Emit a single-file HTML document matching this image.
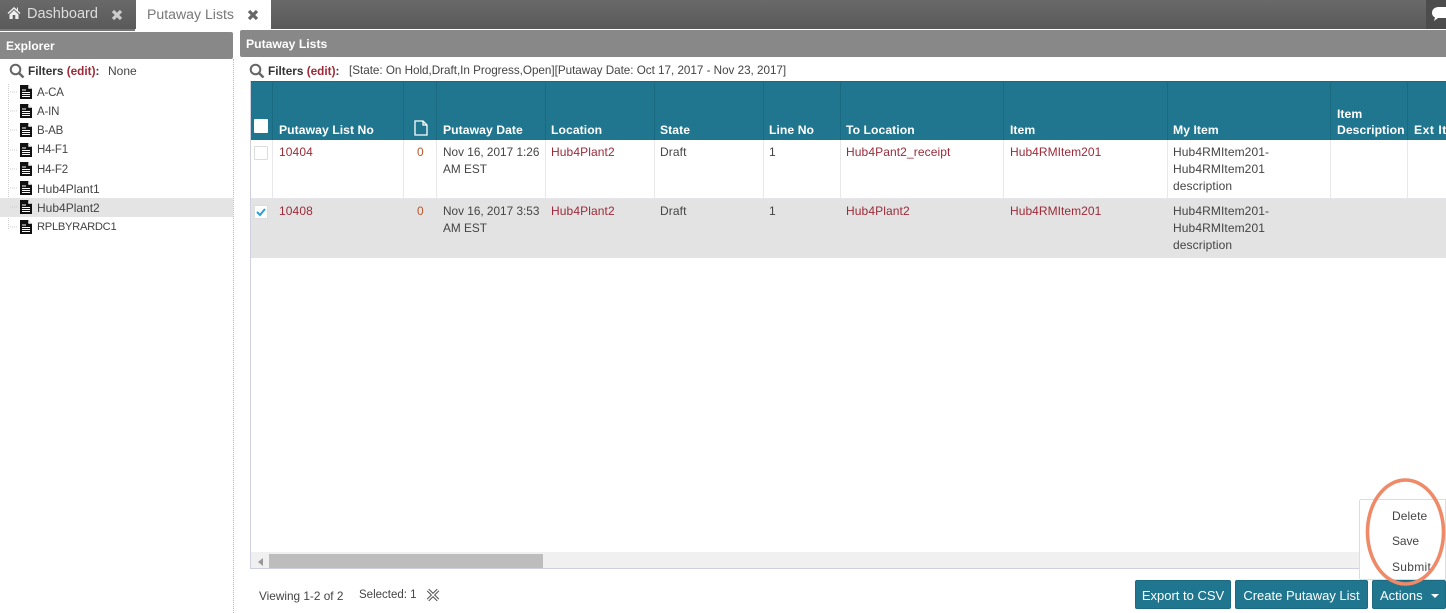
<!DOCTYPE html>
<html><head><meta charset="utf-8">
<style>
*{box-sizing:border-box}
html,body{margin:0;padding:0;width:1446px;height:613px;overflow:hidden;background:#fff}
body{font-family:"Liberation Sans",sans-serif;font-size:12px;color:#444;position:relative}
.a{position:absolute;white-space:nowrap}
.r{color:#9c2a38}
.h{color:#fff;font-weight:bold;font-size:12.2px;letter-spacing:.05px}
.c{font-size:12px;letter-spacing:.1px;line-height:17px}
.v{position:absolute;width:1px;background:#e8e8ec}
.vh{position:absolute;width:1px;background:#1a6a82;top:82px;height:58px}
.btn{position:absolute;top:580px;height:29px;background:#20758f;color:#fff;border-radius:2px;font-size:13px;line-height:29px;text-align:center;border:1px solid #1c6a82}
.t{font-size:12px}
.u{font-size:11.500px;letter-spacing:-.2px}
</style></head><body>
<!-- top bar -->
<div class="a" style="left:0;top:0;width:1446px;height:29px;background:linear-gradient(#696969,#5a5a5a)"></div>
<div class="a" style="left:0;top:29px;width:135px;height:2px;background:#777"></div>
<div class="a" style="left:136px;top:0;width:135px;height:30px;background:#fff"></div>
<div class="a" style="left:1426px;top:0;width:20px;height:29px;background:#4c4c4c"></div>
<svg class="a" style="left:7px;top:6px" width="14" height="13" viewBox="0 0 14 13"><path d="M7 1 0.5 7l1 1L7 3l5.500 5 1-1-2.500-2.300V1.500H10v2L7 1zM2.500 8.500V13h3.200V9h2.600v4h3.200V8.500L7 4.300z" fill="#eee"/></svg>
<div class="a" style="left:27px;top:6px;font-size:14.500px;color:#ddd">Dashboard</div>
<svg class="a" style="left:111px;top:9px" width="12" height="12" viewBox="0 0 12 12"><path d="M2 2l8 8M10 2l-8 8" stroke="#ccc" stroke-width="3.200"/></svg>
<div class="a" style="left:147px;top:6px;font-size:14.100px;color:#777">Putaway Lists</div>
<svg class="a" style="left:247px;top:9px" width="12" height="12" viewBox="0 0 12 12"><path d="M2 2l8 8M10 2l-8 8" stroke="#666" stroke-width="3.200"/></svg>
<svg class="a" style="left:1431px;top:5px" width="15" height="17" viewBox="0 0 15 17"><path d="M8 2C3 2 1 5 1 8c0 2 1 3.500 3 4.500L3 16l4-3h8V2z" fill="#fff"/></svg>
<!-- explorer -->
<div class="a" style="left:0;top:32px;width:233px;height:27px;background:#888;border-radius:0 2px 2px 0"></div>
<div class="a" style="left:6px;top:39px;color:#fff;font-weight:bold;font-size:12px">Explorer</div>
<div class="a" style="left:233px;top:59px;width:1px;height:554px;border-left:1px dotted #bbb"></div>
<svg class="a" style="left:9px;top:63px" width="16" height="16" viewBox="0 0 16 16"><circle cx="6.500" cy="6.500" r="4.800" fill="none" stroke="#666" stroke-width="2"/><path d="M10 10l4.500 4.500" stroke="#666" stroke-width="2.500"/></svg>
<div class="a" style="left:28px;top:64px;font-weight:bold;color:#333;font-size:11.800px">Filters <span class="r">(edit)</span>:</div>
<div class="a t" style="left:108px;top:64px">None</div>
<div class="a" style="left:8px;top:84px;width:1px;height:145px;border-left:1px dotted #ccc"></div>
<div class="a" style="left:0;top:198px;width:233px;height:19px;background:#e4e4e4"></div>
<svg class="a" style="left:9px;top:84px" width="26" height="152" viewBox="0 0 26 152">
<defs><g id="f"><path d="M11 1h8l4 4v10H11z" fill="#111"/><path d="M13 6h4M13 8.500h8M13 10.500h8M13 12.500h8" stroke="#fff" stroke-width="1"/><path d="M19 1v4h4" fill="#fff" stroke="#111" stroke-width=".6"/><path d="M1 8h7" stroke="#ccc" stroke-dasharray="1 1"/></g></defs>
<use href="#f" y="0"/><use href="#f" y="19"/><use href="#f" y="38"/><use href="#f" y="58"/><use href="#f" y="77"/><use href="#f" y="96"/><use href="#f" y="115"/><use href="#f" y="135"/>
</svg>
<div class="a u" style="left:37px;top:87px">A-CA</div>
<div class="a u" style="left:37px;top:106px">A-IN</div>
<div class="a u" style="left:37px;top:125px">B-AB</div>
<div class="a u" style="left:37px;top:144px">H4-F1</div>
<div class="a u" style="left:37px;top:164px">H4-F2</div>
<div class="a t" style="left:37px;top:182px">Hub4Plant1</div>
<div class="a t" style="left:37px;top:201px">Hub4Plant2</div>
<div class="a" style="left:37px;top:221px;font-size:11.200px;letter-spacing:-.3px">RPLBYRARDC1</div>
<!-- main -->
<div class="a" style="left:240px;top:30px;width:1206px;height:27px;background:#888;border-radius:2px 0 0 2px"></div>
<div class="a" style="left:246px;top:37px;color:#fff;font-weight:bold;font-size:12.200px">Putaway Lists</div>
<svg class="a" style="left:249px;top:63px" width="16" height="16" viewBox="0 0 16 16"><circle cx="6.500" cy="6.500" r="4.800" fill="none" stroke="#666" stroke-width="2"/><path d="M10 10l4.500 4.500" stroke="#666" stroke-width="2.500"/></svg>
<div class="a" style="left:268px;top:64px;font-weight:bold;color:#333;font-size:11.800px">Filters <span class="r">(edit)</span>:</div>
<div class="a" style="left:349px;top:64px;font-size:11.700px;letter-spacing:-.025px">[State: On Hold,Draft,In Progress,Open][Putaway Date: Oct 17, 2017 - Nov 23, 2017]</div>
<!-- table -->
<div class="a" style="left:250px;top:81px;width:1196px;height:488px;border-left:1px solid #cfd0de;border-bottom:1px solid #cfd0de"></div>
<div class="a" style="left:251px;top:81px;width:1195px;height:59px;background:#20758f;border-top:1px solid #1a6a82"></div>
<div class="a" style="left:251px;top:199px;width:1195px;height:59px;background:#e3e3e3"></div>
<div class="a" style="left:251px;top:198px;width:1195px;height:1px;background:#e6e6ea"></div>
<div class="vh" style="left:272px"></div><div class="vh" style="left:403px"></div><div class="vh" style="left:436px"></div><div class="vh" style="left:545px"></div><div class="vh" style="left:654px"></div><div class="vh" style="left:763px"></div><div class="vh" style="left:840px"></div><div class="vh" style="left:1003px"></div><div class="vh" style="left:1167px"></div><div class="vh" style="left:1330px"></div><div class="vh" style="left:1407px"></div>
<div class="v" style="left:272px;top:140px;height:58px"></div><div class="v" style="left:403px;top:140px;height:58px"></div><div class="v" style="left:436px;top:140px;height:58px"></div><div class="v" style="left:545px;top:140px;height:58px"></div><div class="v" style="left:654px;top:140px;height:58px"></div><div class="v" style="left:763px;top:140px;height:58px"></div><div class="v" style="left:840px;top:140px;height:58px"></div><div class="v" style="left:1003px;top:140px;height:58px"></div><div class="v" style="left:1167px;top:140px;height:58px"></div><div class="v" style="left:1330px;top:140px;height:58px"></div><div class="v" style="left:1407px;top:140px;height:58px"></div>
<div class="a" style="left:254px;top:119px;width:14px;height:14px;background:#fff;border-radius:1px"></div>
<svg class="a" style="left:413px;top:120px" width="16" height="16" viewBox="0 0 16 16"><path d="M2 1h8l4 4v10H2zM10 1v4h4" fill="none" stroke="#fff" stroke-width="1.300"/></svg>
<div class="a h" style="left:279px;top:123px">Putaway List No</div>
<div class="a h" style="left:443px;top:123px">Putaway Date</div>
<div class="a h" style="left:551px;top:123px">Location</div>
<div class="a h" style="left:660px;top:123px">State</div>
<div class="a h" style="left:769px;top:123px">Line No</div>
<div class="a h" style="left:846px;top:123px">To Location</div>
<div class="a h" style="left:1010px;top:123px">Item</div>
<div class="a h" style="left:1173px;top:123px">My Item</div>
<div class="a h" style="left:1337px;top:107px">Item</div>
<div class="a h" style="left:1337px;top:123px">Description</div>
<div class="a h" style="left:1414px;top:123px;letter-spacing:.5px">Ext It</div>
<!-- rows -->
<div class="a" style="left:254px;top:146px;width:14px;height:14px;background:#fff;border:1px solid #ddd;border-radius:1px"></div>
<div class="a c r" style="left:279px;top:144px">10404</div>
<div class="a c" style="left:417px;top:144px;color:#b5572c">0</div>
<div class="a c" style="left:443px;top:144px;font-size:11.800px;letter-spacing:0">Nov 16, 2017 1:26<br>AM EST</div>
<div class="a c r" style="left:551px;top:144px">Hub4Plant2</div>
<div class="a c" style="left:660px;top:144px">Draft</div>
<div class="a c" style="left:769px;top:144px">1</div>
<div class="a c r" style="left:846px;top:144px">Hub4Pant2_receipt</div>
<div class="a c r" style="left:1010px;top:144px;letter-spacing:.05px">Hub4RMItem201</div>
<div class="a c" style="left:1173px;top:144px">Hub4RMItem201-<br>Hub4RMItem201<br>description</div>
<div class="a" style="left:254px;top:205px;width:14px;height:14px;background:#fff;border:1px solid #ddd;border-radius:1px"></div>
<svg class="a" style="left:255px;top:206px" width="12" height="12" viewBox="0 0 12 12"><path d="M2 6l3 3 5-6" fill="none" stroke="#2f9fd0" stroke-width="2"/></svg>
<div class="a c r" style="left:279px;top:203px">10408</div>
<div class="a c" style="left:417px;top:203px;color:#b5572c">0</div>
<div class="a c" style="left:443px;top:203px;font-size:11.800px;letter-spacing:0">Nov 16, 2017 3:53<br>AM EST</div>
<div class="a c r" style="left:551px;top:203px">Hub4Plant2</div>
<div class="a c" style="left:660px;top:203px">Draft</div>
<div class="a c" style="left:769px;top:203px">1</div>
<div class="a c r" style="left:846px;top:203px">Hub4Plant2</div>
<div class="a c r" style="left:1010px;top:203px;letter-spacing:.05px">Hub4RMItem201</div>
<div class="a c" style="left:1173px;top:203px">Hub4RMItem201-<br>Hub4RMItem201<br>description</div>
<!-- scrollbar -->
<div class="a" style="left:251px;top:552px;width:1195px;height:16px;background:#f0f0f0"></div>
<div class="a" style="left:269px;top:554px;width:274px;height:14px;background:#bdbdbd"></div>
<div class="a" style="left:258px;top:558px;width:0;height:0;border:4px solid transparent;border-right:5px solid #999;border-left:0"></div>
<!-- footer -->
<div class="a" style="left:259px;top:589px;font-size:11.800px">Viewing 1-2 of 2</div>
<div class="a" style="left:359px;top:589px;font-size:11.500px">Selected: 1</div>
<svg class="a" style="left:426px;top:588px" width="14" height="14" viewBox="0 0 14 14"><path d="M2 2l10 10M12 2L2 12" stroke="#555" stroke-width="3.400"/><path d="M2 2l10 10M12 2L2 12" stroke="#fff" stroke-width="1.300"/></svg>
<div class="btn" style="left:1135px;width:96px">Export to CSV</div>
<div class="btn" style="left:1235px;width:133px">Create Putaway List</div>
<div class="btn" style="left:1372px;width:74px;text-align:left;padding-left:7px">Actions</div>
<div class="a" style="left:1431px;top:594px;width:0;height:0;border:4px solid transparent;border-top:4px solid #fff;border-bottom:0"></div>
<!-- dropdown -->
<div class="a" style="left:1359px;top:499px;width:87px;height:81px;background:#fff;border:1px solid #ddd;border-radius:2px 0 0 2px"></div>
<div class="a" style="left:1392px;top:509px;font-size:12px;letter-spacing:.1px">Delete</div>
<div class="a" style="left:1392px;top:534px;font-size:12px;letter-spacing:-.1px">Save</div>
<div class="a" style="left:1392px;top:560px;font-size:12px;letter-spacing:.3px">Submit</div>
<svg class="a" style="left:1360px;top:474px" width="86" height="114" viewBox="0 0 86 114"><ellipse cx="45.500" cy="58" rx="38" ry="52" fill="none" stroke="#ee8a68" stroke-width="3.600"/></svg>
</body></html>
